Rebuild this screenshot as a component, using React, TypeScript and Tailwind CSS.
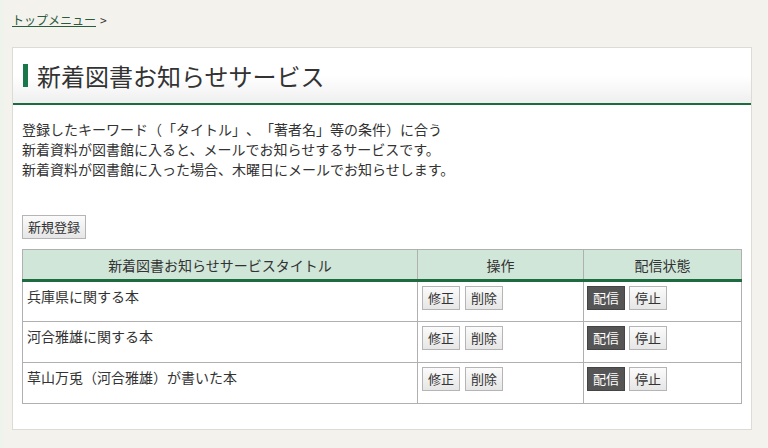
import React from "react";

const font = { fontFamily: '"Noto Sans CJK JP", "Noto Sans", sans-serif' };

function Btn({ children, dark = false }: { children: React.ReactNode; dark?: boolean }) {
  return (
    <button
      className={
        dark
          ? "h-[24px] px-[5px] text-[13px] leading-[22px] border border-[#444] bg-[#555555] text-white"
          : "h-[24px] px-[5px] text-[13px] leading-[22px] border border-[#b5b5b5] bg-gradient-to-b from-[#fbfbfb] to-[#e6e6e6] text-[#333]"
      }
    >
      {children}
    </button>
  );
}

const rows = ["兵庫県に関する本", "河合雅雄に関する本", "草山万兎（河合雅雄）が書いた本"];

export default function App() {
  return (
    <div style={font} className="w-[768px] h-[448px] bg-[#f3f2ec] text-[#333] overflow-hidden relative [text-spacing-trim:space-all]">
      <div className="absolute left-0 top-0 bottom-0 w-[4px] bg-[#eef3ec]" />
      <div className="pl-[12px] pt-[11px] h-[47px] text-[12px] leading-[18px]">
        <a className="text-[#2b5a3c] underline">トップメニュー</a>
        <span className="ml-[4px]">&gt;</span>
      </div>
      <div className="ml-[12px] w-[740px] h-[383px] border border-[#dcdcd4] bg-white">
        <div className="h-[57px] bg-gradient-to-b from-white via-white to-[#efefef] border-b-2 border-[#1d6b3f] flex items-center pl-[10px]">
          <div className="w-[5px] h-[23px] bg-[#19774a] mr-[9px]" />
          <h1 className="text-[24px] leading-[30px] text-[#333]">新着図書お知らせサービス</h1>
        </div>
        <div className="px-[9px] pt-[14px]">
          <p className="text-[14px] leading-[20px]">
            登録したキーワード（「タイトル」、「著者名」等の条件）に合う
            <br />
            新着資料が図書館に入ると、メールでお知らせするサービスです。
            <br />
            新着資料が図書館に入った場合、木曜日にメールでお知らせします。
          </p>
          <div className="mt-[34px]">
            <button className="h-[24px] px-[5px] text-[13px] leading-[22px] border border-[#b5b5b5] bg-gradient-to-b from-[#fbfbfb] to-[#e6e6e6] text-[#333]">
              新規登録
            </button>
          </div>
          <table className="mt-[10px] w-[720px] border-collapse border border-[#b0b0b0] text-[14px]">
            <thead>
              <tr className="bg-[#cfe6d8] h-[31px]">
                <th className="w-[395px] font-normal border border-[#b0b0b0] border-b-[3px] border-b-[#1d6b3f] leading-[20px]">新着図書お知らせサービスタイトル</th>
                <th className="w-[166px] font-normal border border-[#b0b0b0] border-b-[3px] border-b-[#1d6b3f] leading-[20px]">操作</th>
                <th className="font-normal border border-[#b0b0b0] border-b-[3px] border-b-[#1d6b3f] leading-[20px]">配信状態</th>
              </tr>
            </thead>
            <tbody>
              {rows.map((r) => (
                <tr key={r} className="h-[41px]">
                  <td className="align-top border border-[#b0b0b0] pl-[4px] pt-[4px] leading-[20px]">{r}</td>
                  <td className="align-top border border-[#b0b0b0] pl-[4px] pt-[4px]">
                    <div className="flex gap-[5px]">
                      <Btn>修正</Btn>
                      <Btn>削除</Btn>
                    </div>
                  </td>
                  <td className="align-top border border-[#b0b0b0] pl-[3px] pt-[4px]">
                    <div className="flex gap-[4px]">
                      <Btn dark>配信</Btn>
                      <Btn>停止</Btn>
                    </div>
                  </td>
                </tr>
              ))}
            </tbody>
          </table>
        </div>
      </div>
    </div>
  );
}
